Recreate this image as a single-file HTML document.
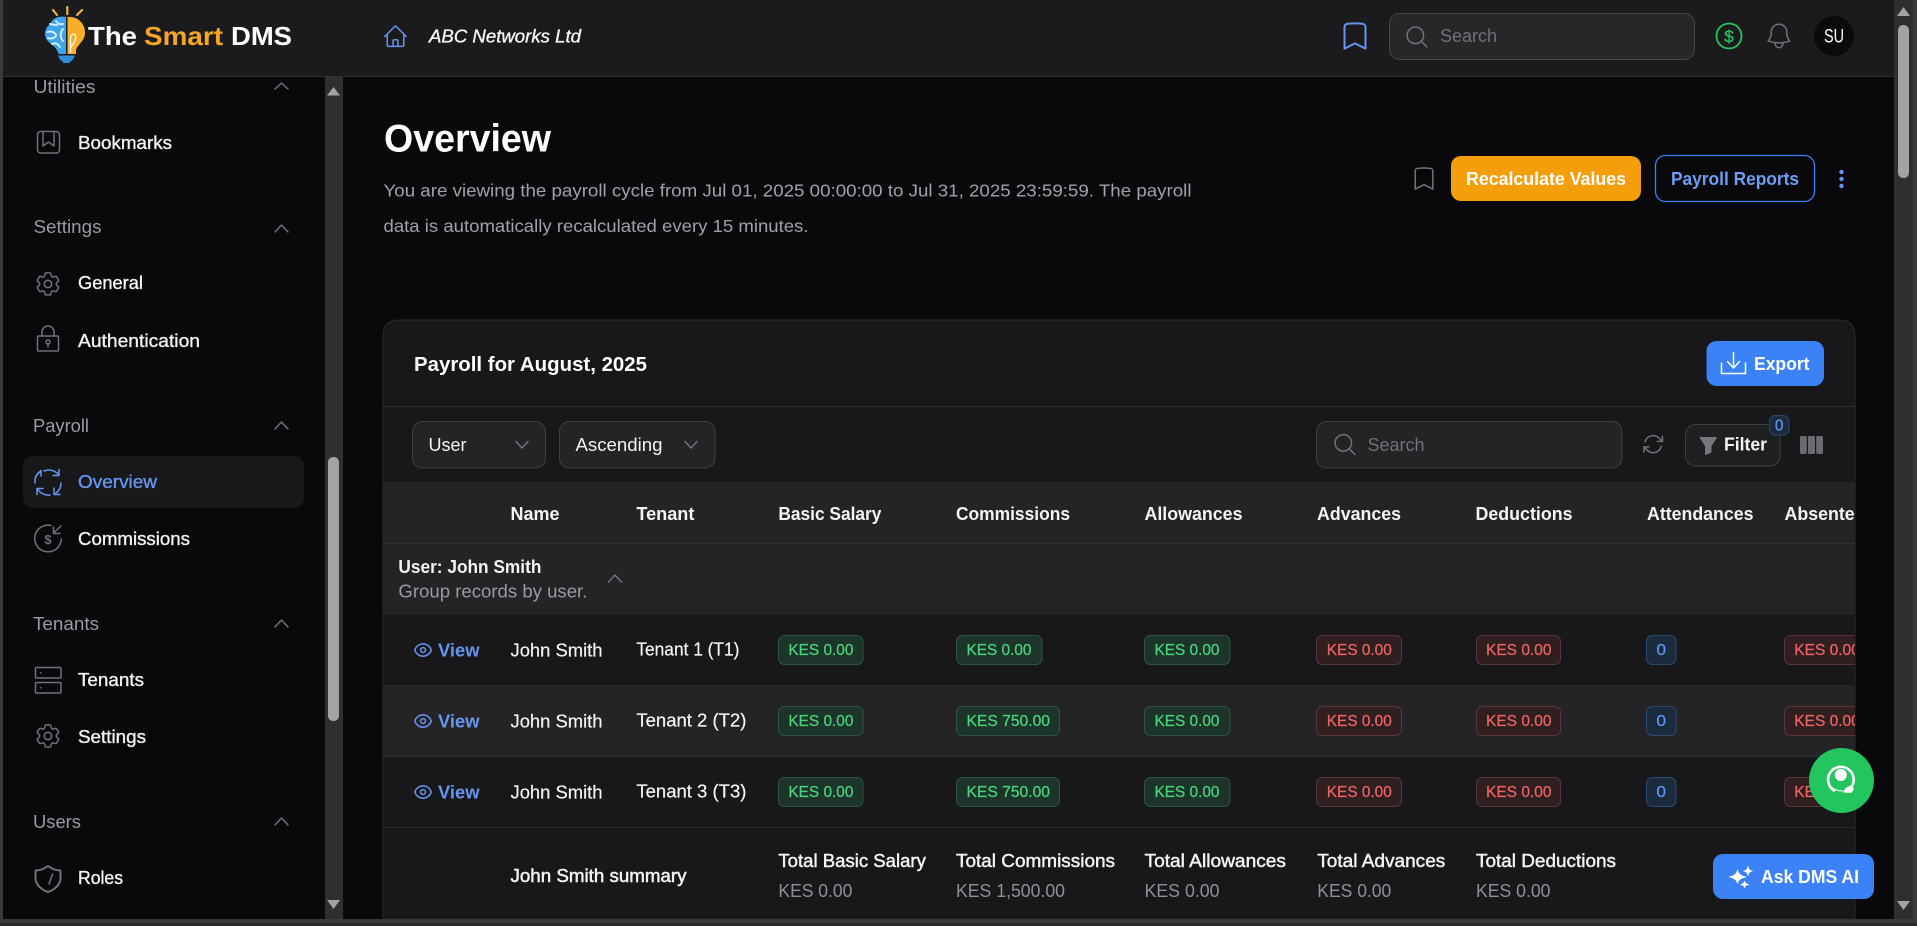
<!DOCTYPE html>
<html lang="en"><head><meta charset="utf-8"><title>Payroll Overview - The Smart DMS</title>
<style>
html,body{margin:0;padding:0;background:#3a3a3a;width:1917px;height:926px;overflow:hidden}
svg{display:block}
text{font-family:"Liberation Sans",sans-serif;fill:currentColor;font-size:18.2px;color:#f4f4f5;white-space:pre}
.m{stroke:currentColor;stroke-width:.35px}
.b{font-weight:700}
.g{color:#a1a1aa}
.h{color:#9a9aa2;font-size:18.2px}
.blue{color:#6496f0}
.kg{color:#4ad47c;font-size:15.5px;stroke:currentColor;stroke-width:.25px}
.kr{color:#ee6363;font-size:15.5px;stroke:currentColor;stroke-width:.25px}
.kb{color:#5b96f0;font-size:15.5px;stroke:currentColor;stroke-width:.25px}
.i{fill:none;stroke:#71717a;stroke-width:1.5;stroke-linecap:round;stroke-linejoin:round}
.i path,.i circle,.i rect{vector-effect:non-scaling-stroke}
.bg{fill:#1c3429;stroke:#2e5540;stroke-width:1}
.br{fill:#2f1f21;stroke:#5e3436;stroke-width:1}
.bb{fill:#1c2a3e;stroke:#2c4a70;stroke-width:1}
</style></head><body>
<svg width="1917" height="926" viewBox="0 0 1917 926" xmlns="http://www.w3.org/2000/svg">
<defs><clipPath id="c"><rect x="383" y="482" width="1472" height="437"/></clipPath></defs>
<rect width="1917" height="926" fill="#3a3a3a"/>
<rect y="923" width="1917" height="3" fill="#2a2a2a"/>
<rect x="3" y="0" width="1891" height="919" fill="#09090b"/>
<rect x="1894" y="0" width="19" height="919" fill="#2f2f2f"/>

<!-- header -->
<rect x="3" y="0" width="1891" height="77" fill="#1b1b1e"/>
<rect x="3" y="76" width="1891" height="1" fill="#303034"/>

<!-- logo -->
<g>
<path d="M67.300 7v7M53 10l4 5M82 10l-5 5" stroke="#edb245" stroke-width="2.200" stroke-linecap="round" fill="none"/>
<path d="M66 17C58 15.500 51.500 19 50.500 24C46 26.500 44 32 45.500 37C47 42 52 44 55 47.500C57 50 58 52 58.500 54H66Z" fill="#3fa4ef"/>
<path d="M67.500 17C78 16 85 24 85 32.500C85 41 78 44 76 50V54H67.500Z" fill="#f9ae2a"/>
<path d="M50 24c3 0 5 2 7 1M47.500 32c4-1 7 0 8.500 3M48 38c3 1 6 .5 8-2M56 21c1 2 4 4 7 3M63 29c-3 3-3 9 0 12M52 44c3-1.500 6-.5 8 3" stroke="#d8effd" stroke-width="1.900" fill="none" stroke-linecap="round"/>
<path d="M70.500 53V39c0-7 6.500-6 5 0c-1 4-3.500 6-5 9" stroke="#fff" stroke-width="1.300" fill="none"/>
<path d="M58 55.500H75L73 59.500L69 63H64L60 59.500Z" fill="#2f8fdc"/>
</g>
<text x="88" y="45" class="b" style="font-size:26px;color:#fff" textLength="49" lengthAdjust="spacingAndGlyphs">The</text>
<text x="144" y="45" class="b" style="font-size:26px;color:#f5a623" textLength="79" lengthAdjust="spacingAndGlyphs">Smart</text>
<text x="231" y="45" class="b" style="font-size:26px;color:#fff" textLength="61" lengthAdjust="spacingAndGlyphs">DMS</text>

<g class="i" transform="translate(382.300 23.300) scale(1.100)" style="stroke:#6496f0"><path d="M2.250 12l8.954-8.955c.44-.439 1.152-.439 1.591 0L21.750 12M4.500 9.750v10.125c0 .621.504 1.125 1.125 1.125H9.750v-4.875c0-.621.504-1.125 1.125-1.125h2.250c.621 0 1.125.504 1.125 1.125V21h4.125c.621 0 1.125-.504 1.125-1.125V9.750M8.250 21h8.250"/></g>
<text x="429" y="42.500" class="m" style="font-style:italic;font-size:18px" textLength="152" lengthAdjust="spacingAndGlyphs">ABC Networks Ltd</text>

<g class="i" transform="translate(1338.200 19.200) scale(1.400)" style="stroke:#6496f0;stroke-width:2"><path d="M17.593 3.322c1.100.128 1.907 1.077 1.907 2.185V21L12 17.250 4.500 21V5.507c0-1.108.806-2.057 1.907-2.185a48.507 48.507 0 0111.186 0z"/></g>
<rect x="1389.500" y="13.500" width="305" height="46" rx="10" fill="#27272a" stroke="#46464c"/>
<g class="i" transform="translate(1403.800 23.800) scale(1.100)"><path d="M21 21l-5.197-5.197m0 0A7.500 7.500 0 105.196 5.196a7.500 7.500 0 0010.607 10.607z"/></g>
<text x="1440" y="42" style="color:#71717a;font-size:18.500px" textLength="57" lengthAdjust="spacingAndGlyphs">Search</text>
<circle cx="1729" cy="36" r="12.500" fill="none" stroke="#22c55e" stroke-width="1.800"/>
<text x="1729" y="42" text-anchor="middle" class="m" style="font-size:17px;color:#22c55e">$</text>
<g class="i" transform="translate(1763.400 20.400) scale(1.300)"><path d="M14.857 17.082a23.848 23.848 0 005.454-1.310A8.967 8.967 0 0118 9.750v-.7V9A6 6 0 006 9v.750a8.967 8.967 0 01-2.312 6.022c1.733.64 3.560 1.085 5.455 1.310m5.714 0a24.255 24.255 0 01-5.714 0m5.714 0a3 3 0 11-5.714 0"/></g>
<circle cx="1834" cy="36" r="20" fill="#0a0a0b"/>
<text x="1824" y="42.500" style="font-size:19px;color:#fff" textLength="20" lengthAdjust="spacingAndGlyphs">SU</text>

<!-- main scrollbar -->
<path d="M1903.500 7L1910 16H1897Z" fill="#a3a3a3"/>
<rect x="1898" y="25" width="11" height="153" rx="5" fill="#a3a3a3"/>
<path d="M1903.500 910L1910 901H1897Z" fill="#a3a3a3"/>

<!-- sidebar -->
<path d="M3 77H325V919H15Q3 919 3 907Z" fill="#09090b"/>
<rect x="325" y="77" width="18" height="842" fill="#2f2f2f"/>
<path d="M333.500 87L340 95.500H327Z" fill="#a3a3a3"/>
<rect x="328" y="457" width="11" height="264" rx="5" fill="#a3a3a3"/>
<path d="M333.500 909L340 900H327Z" fill="#a3a3a3"/>

<text x="33.500" y="93" class="h" textLength="62" lengthAdjust="spacingAndGlyphs">Utilities</text>
<g class="i"><path d="M275 89l6.500-6 6.500 6"/></g>
<g class="i"><rect x="37.500" y="131.500" width="22" height="21.500" rx="3"/><path d="M43 132v14l5.500-4 5.500 4v-14"/></g>
<text x="78" y="149" class="m" textLength="94" lengthAdjust="spacingAndGlyphs">Bookmarks</text>

<text x="33.500" y="233" class="h" textLength="68" lengthAdjust="spacingAndGlyphs">Settings</text>
<g class="i"><path d="M275 232l6.500-7 6.500 7"/></g>
<g class="i" transform="translate(33.200 269.200) scale(1.230)"><path d="M9.594 3.940c.09-.542.56-.94 1.110-.94h2.593c.55 0 1.020.398 1.110.94l.213 1.281c.063.374.313.686.645.87.074.04.147.083.22.127.324.196.72.257 1.075.124l1.217-.456a1.125 1.125 0 011.370.49l1.296 2.247a1.125 1.125 0 01-.26 1.431l-1.003.827c-.293.24-.438.613-.431.992a6.759 6.759 0 010 .255c-.007.378.138.75.43.99l1.005.828c.424.35.534.954.26 1.430l-1.298 2.247a1.125 1.125 0 01-1.369.491l-1.217-.456c-.355-.133-.75-.072-1.076.124a6.570 6.570 0 01-.22.128c-.331.183-.581.495-.644.869l-.213 1.280c-.09.543-.56.941-1.110.941h-2.594c-.55 0-1.020-.398-1.110-.94l-.213-1.281c-.062-.374-.312-.686-.644-.87a6.520 6.520 0 01-.22-.127c-.325-.196-.72-.257-1.076-.124l-1.217.456a1.125 1.125 0 01-1.369-.49l-1.297-2.247a1.125 1.125 0 01.26-1.431l1.004-.827c.292-.24.437-.613.43-.992a6.932 6.932 0 010-.255c.007-.378-.138-.75-.43-.99l-1.004-.828a1.125 1.125 0 01-.26-1.430l1.297-2.247a1.125 1.125 0 011.370-.491l1.216.456c.356.133.751.072 1.076-.124.072-.044.146-.087.22-.128.332-.183.582-.495.644-.869l.214-1.281z"/><path d="M15 12a3 3 0 11-6 0 3 3 0 016 0z"/></g>
<text x="78" y="289" class="m" textLength="65" lengthAdjust="spacingAndGlyphs">General</text>

<g class="i"><rect x="37.500" y="336" width="21" height="15" rx="1"/><path d="M42 336v-4a6 6 0 0112 0v4M48 344v3"/><circle cx="48" cy="342" r="2"/></g>
<text x="78" y="347" class="m" textLength="122" lengthAdjust="spacingAndGlyphs">Authentication</text>

<text x="33" y="432" class="h" textLength="56" lengthAdjust="spacingAndGlyphs">Payroll</text>
<g class="i"><path d="M275 429l6.500-7 6.500 7"/></g>
<rect x="23" y="456" width="281" height="52" rx="10" fill="#18181b"/>
<g class="i" style="stroke:#6496f0"><path d="M44 471A13 13 0 0159 475M59 469.500V475.500H53M61 483A13 13 0 0155.500 493.500M54 488V494.500H60M50 495A13 13 0 0137.500 489M37 494.500V488.500H43M35 483A13 13 0 0140 471.500M35.500 476.500L41 470.500V476"/></g>
<text x="78" y="488" class="blue m" textLength="79" lengthAdjust="spacingAndGlyphs">Overview</text>

<g class="i"><path d="M51 525.500A13.300 13.300 0 1061.300 539M61 526L53.500 533M53.500 527V533.500H60"/></g>
<text x="48" y="544" text-anchor="middle" class="b" style="font-size:13px;color:#71717a">$</text>
<text x="78" y="545" class="m" textLength="112" lengthAdjust="spacingAndGlyphs">Commissions</text>

<text x="33" y="630" class="h" textLength="66" lengthAdjust="spacingAndGlyphs">Tenants</text>
<g class="i"><path d="M275 627l6.500-7 6.500 7"/></g>
<g class="i"><rect x="35.500" y="667.500" width="25.500" height="10.500" rx="1"/><rect x="35.500" y="682.500" width="25.500" height="10.500" rx="1"/><path d="M40.500 672.800h.3M40.500 687.800h.3"/></g>
<text x="78" y="686" class="m" textLength="66" lengthAdjust="spacingAndGlyphs">Tenants</text>

<g class="i" transform="translate(33.200 721.200) scale(1.230)"><path d="M9.594 3.940c.09-.542.56-.94 1.110-.94h2.593c.55 0 1.020.398 1.110.94l.213 1.281c.063.374.313.686.645.87.074.04.147.083.22.127.324.196.72.257 1.075.124l1.217-.456a1.125 1.125 0 011.370.49l1.296 2.247a1.125 1.125 0 01-.26 1.431l-1.003.827c-.293.24-.438.613-.431.992a6.759 6.759 0 010 .255c-.007.378.138.75.43.99l1.005.828c.424.35.534.954.26 1.430l-1.298 2.247a1.125 1.125 0 01-1.369.491l-1.217-.456c-.355-.133-.75-.072-1.076.124a6.570 6.570 0 01-.22.128c-.331.183-.581.495-.644.869l-.213 1.280c-.09.543-.56.941-1.110.941h-2.594c-.55 0-1.020-.398-1.110-.94l-.213-1.281c-.062-.374-.312-.686-.644-.87a6.520 6.520 0 01-.22-.127c-.325-.196-.72-.257-1.076-.124l-1.217.456a1.125 1.125 0 01-1.369-.49l-1.297-2.247a1.125 1.125 0 01.26-1.431l1.004-.827c.292-.24.437-.613.43-.992a6.932 6.932 0 010-.255c.007-.378-.138-.75-.43-.99l-1.004-.828a1.125 1.125 0 01-.26-1.430l1.297-2.247a1.125 1.125 0 011.370-.491l1.216.456c.356.133.751.072 1.076-.124.072-.044.146-.087.22-.128.332-.183.582-.495.644-.869l.214-1.281z"/><path d="M15 12a3 3 0 11-6 0 3 3 0 016 0z"/></g>
<text x="78" y="743" class="m" textLength="68" lengthAdjust="spacingAndGlyphs">Settings</text>

<text x="33" y="828" class="h" textLength="48" lengthAdjust="spacingAndGlyphs">Users</text>
<g class="i"><path d="M275 825l6.500-7 6.500 7"/></g>
<g class="i" style="stroke-width:2"><path d="M48 866C52 869 57 870.500 60.500 870.500V878C60.500 885 54 890 48 892C42 890 35.500 885 35.500 878V870.500C39 870.500 44 869 48 866Z"/><path d="M52.500 874L49 884" style="stroke-width:1.500"/></g>
<text x="78" y="884" class="m" textLength="45" lengthAdjust="spacingAndGlyphs">Roles</text>

<!-- page head -->
<text x="384" y="151.500" class="b" style="font-size:39px;color:#fff" textLength="167" lengthAdjust="spacingAndGlyphs">Overview</text>
<text x="383.500" y="196.500" class="g" style="font-size:17.800px" textLength="808" lengthAdjust="spacingAndGlyphs">You are viewing the payroll cycle from Jul 01, 2025 00:00:00 to Jul 31, 2025 23:59:59. The payroll</text>
<text x="383.500" y="232" class="g" style="font-size:17.800px" textLength="425" lengthAdjust="spacingAndGlyphs">data is automatically recalculated every 15 minutes.</text>

<g class="i" transform="translate(1410 164.500) scale(1.170)"><path d="M17.593 3.322c1.100.128 1.907 1.077 1.907 2.185V21L12 17.250 4.500 21V5.507c0-1.108.806-2.057 1.907-2.185a48.507 48.507 0 0111.186 0z"/></g>
<rect x="1451" y="156" width="190" height="45" rx="10" fill="#f59e0b"/>
<text x="1466" y="185" class="b" style="font-size:18px;color:#fff" textLength="160" lengthAdjust="spacingAndGlyphs">Recalculate Values</text>
<rect x="1655.500" y="155.500" width="159" height="46" rx="10" fill="none" stroke="#3b82f6" stroke-width="1.300"/>
<text x="1671" y="185" class="b" style="font-size:18px;color:#6a9ff5" textLength="128" lengthAdjust="spacingAndGlyphs">Payroll Reports</text>
<circle cx="1841.500" cy="172" r="2.200" fill="#6496f0"/><circle cx="1841.500" cy="179" r="2.200" fill="#6496f0"/><circle cx="1841.500" cy="186" r="2.200" fill="#6496f0"/>

<!-- card -->
<path d="M383 336Q383 320 399 320H1839Q1855 320 1855 336V919H383Z" fill="#18181b" stroke="#2a2a2e"/>
<rect x="383" y="406" width="1472" height="1" fill="#2f2f33"/>
<text x="414" y="371" class="b" style="font-size:20px;color:#fff" textLength="233" lengthAdjust="spacingAndGlyphs">Payroll for August, 2025</text>
<rect x="1706.500" y="341" width="117.500" height="45" rx="10" fill="#3b82f6"/>
<g class="i" style="stroke:#fff"><path d="M1721.500 363v10.500h24V363M1733.500 352.500v15M1727.500 361.500l6 6.500 6-6.500"/></g>
<text x="1754" y="370" class="b" style="font-size:18.500px;color:#fff" textLength="55.500" lengthAdjust="spacingAndGlyphs">Export</text>

<rect x="412.500" y="421.500" width="133" height="46.500" rx="10" fill="#242427" stroke="#3f3f46"/>
<text x="428.500" y="451" style="font-size:18.200px" textLength="38" lengthAdjust="spacingAndGlyphs">User</text>
<g class="i"><path d="M516 441.500l6 6.500 6-6.500"/></g>
<rect x="559.500" y="421.500" width="155.500" height="46.500" rx="10" fill="#242427" stroke="#3f3f46"/>
<text x="575.500" y="451" style="font-size:18.200px" textLength="87" lengthAdjust="spacingAndGlyphs">Ascending</text>
<g class="i"><path d="M685 441.500l6 6.500 6-6.500"/></g>

<rect x="1316.500" y="421.500" width="305.500" height="46.500" rx="10" fill="#242427" stroke="#3f3f46"/>
<g class="i" transform="translate(1331.800 431.300) scale(1.100)"><path d="M21 21l-5.197-5.197m0 0A7.500 7.500 0 105.196 5.196a7.500 7.500 0 0010.607 10.607z"/></g>
<text x="1367.500" y="451" style="color:#71717a;font-size:18.500px" textLength="57" lengthAdjust="spacingAndGlyphs">Search</text>
<g class="i" transform="translate(1640.800 431.800) scale(1.030)"><path d="M16.023 9.348h4.992v-.001M2.985 19.644v-4.992m0 0h4.992m-4.993 0l3.181 3.183a8.250 8.250 0 0013.803-3.700M4.031 9.865a8.250 8.250 0 0113.803-3.700l3.181 3.182m0-4.991v4.990"/></g>
<rect x="1685.500" y="424.500" width="94.500" height="41.500" rx="10" fill="#1f1f22" stroke="#3f3f46"/>
<path d="M1700 437.500H1716.500L1711 446V452L1705.500 454.500V446Z" fill="#76767e" stroke="#76767e" stroke-linejoin="round"/>
<text x="1724" y="450.500" class="b" style="font-size:18.200px;color:#f4f4f5" textLength="43" lengthAdjust="spacingAndGlyphs">Filter</text>
<rect x="1769.500" y="415.500" width="19.500" height="19.500" rx="6" fill="#1c2a3e" stroke="#2c4a70"/>
<text x="1779.200" y="430.500" text-anchor="middle" class="kb" style="font-size:15.500px">0</text>
<rect x="1800" y="436" width="6.800" height="18" rx="1.500" fill="#6b6b72"/><rect x="1808" y="436" width="7" height="18" rx="1" fill="#6b6b72"/><rect x="1816.200" y="436" width="6.800" height="18" rx="1.500" fill="#6b6b72"/>

<!-- table -->
<rect x="383" y="482" width="1472" height="133" fill="#242427"/>
<rect x="383" y="543" width="1472" height="1" fill="#2f2f33"/>
<rect x="383" y="685" width="1472" height="71" fill="#242427"/>
<rect x="383" y="756" width="1472" height="1" fill="#2f2f33"/>
<rect x="383" y="827" width="1472" height="1" fill="#2a2a2e"/>

<g clip-path="url(#c)">
<text x="510.500" y="520" class="b" textLength="49" lengthAdjust="spacingAndGlyphs">Name</text>
<text x="636.400" y="520" class="b" textLength="58" lengthAdjust="spacingAndGlyphs">Tenant</text>
<text x="778.400" y="520" class="b" textLength="103" lengthAdjust="spacingAndGlyphs">Basic Salary</text>
<text x="956" y="520" class="b" textLength="114" lengthAdjust="spacingAndGlyphs">Commissions</text>
<text x="1144.500" y="520" class="b" textLength="98" lengthAdjust="spacingAndGlyphs">Allowances</text>
<text x="1317" y="520" class="b" textLength="84" lengthAdjust="spacingAndGlyphs">Advances</text>
<text x="1475.500" y="520" class="b" textLength="97" lengthAdjust="spacingAndGlyphs">Deductions</text>
<text x="1647" y="520" class="b" textLength="106.500" lengthAdjust="spacingAndGlyphs">Attendances</text>
<text x="1784.500" y="520" class="b" textLength="90" lengthAdjust="spacingAndGlyphs">Absentees</text>

<text x="398.400" y="573" class="b" textLength="143" lengthAdjust="spacingAndGlyphs">User: John Smith</text>
<text x="398.400" y="597.500" class="g" style="color:#9a9aa2" textLength="189" lengthAdjust="spacingAndGlyphs">Group records by user.</text>
<g class="i"><path d="M608.500 582l6.500-7 6.500 7"/></g>

<!-- row 1 -->
<g class="i" transform="translate(413.200 640.200) scale(.82)" style="stroke:#6496f0"><path d="M2.036 12.322a1.012 1.012 0 010-.639C3.423 7.510 7.360 4.500 12 4.500c4.638 0 8.573 3.007 9.963 7.178.07.207.07.431 0 .639C20.577 16.490 16.640 19.500 12 19.500c-4.638 0-8.573-3.007-9.963-7.178z"/><circle cx="12" cy="12" r="3"/></g>
<text x="438" y="656.500" class="b blue" textLength="41.500" lengthAdjust="spacingAndGlyphs">View</text>
<text x="510.500" y="656.500" class="m" style="stroke-width:.2px" textLength="92" lengthAdjust="spacingAndGlyphs">John Smith</text>
<text x="636.400" y="655.500" class="m" style="stroke-width:.2px" textLength="103" lengthAdjust="spacingAndGlyphs">Tenant 1 (T1)</text>
<rect x="778.500" y="635.500" width="84.500" height="29" rx="6" class="bg"/><text x="788.400" y="655" class="kg" textLength="65" lengthAdjust="spacingAndGlyphs">KES 0.00</text>
<rect x="956.500" y="635.500" width="85.500" height="29" rx="6" class="bg"/><text x="966.500" y="655" class="kg" textLength="65" lengthAdjust="spacingAndGlyphs">KES 0.00</text>
<rect x="1144.500" y="635.500" width="85.500" height="29" rx="6" class="bg"/><text x="1154.500" y="655" class="kg" textLength="65" lengthAdjust="spacingAndGlyphs">KES 0.00</text>
<rect x="1316.500" y="635.500" width="85" height="29" rx="6" class="br"/><text x="1326.800" y="655" class="kr" textLength="65" lengthAdjust="spacingAndGlyphs">KES 0.00</text>
<rect x="1476.500" y="635.500" width="84" height="29" rx="6" class="br"/><text x="1486" y="655" class="kr" textLength="65.500" lengthAdjust="spacingAndGlyphs">KES 0.00</text>
<rect x="1646.500" y="635.500" width="29.500" height="29" rx="6" class="bb"/><text x="1656.500" y="655" class="kb" textLength="9.500" lengthAdjust="spacingAndGlyphs">0</text>
<rect x="1784.500" y="635.500" width="85" height="29" rx="6" class="br"/><text x="1794.300" y="655" class="kr" textLength="65.500" lengthAdjust="spacingAndGlyphs">KES 0.00</text>

<!-- row 2 -->
<g class="i" transform="translate(413.200 711.200) scale(.82)" style="stroke:#6496f0"><path d="M2.036 12.322a1.012 1.012 0 010-.639C3.423 7.510 7.360 4.500 12 4.500c4.638 0 8.573 3.007 9.963 7.178.07.207.07.431 0 .639C20.577 16.490 16.640 19.500 12 19.500c-4.638 0-8.573-3.007-9.963-7.178z"/><circle cx="12" cy="12" r="3"/></g>
<text x="438" y="727.500" class="b blue" textLength="41.500" lengthAdjust="spacingAndGlyphs">View</text>
<text x="510.500" y="727.500" class="m" style="stroke-width:.2px" textLength="92" lengthAdjust="spacingAndGlyphs">John Smith</text>
<text x="636.400" y="726.500" class="m" style="stroke-width:.2px" textLength="110" lengthAdjust="spacingAndGlyphs">Tenant 2 (T2)</text>
<rect x="778.500" y="706.500" width="84.500" height="29" rx="6" class="bg"/><text x="788.400" y="726" class="kg" textLength="65" lengthAdjust="spacingAndGlyphs">KES 0.00</text>
<rect x="956.500" y="706.500" width="103" height="29" rx="6" class="bg"/><text x="966.500" y="726" class="kg" textLength="83.500" lengthAdjust="spacingAndGlyphs">KES 750.00</text>
<rect x="1144.500" y="706.500" width="85.500" height="29" rx="6" class="bg"/><text x="1154.500" y="726" class="kg" textLength="65" lengthAdjust="spacingAndGlyphs">KES 0.00</text>
<rect x="1316.500" y="706.500" width="85" height="29" rx="6" class="br"/><text x="1326.800" y="726" class="kr" textLength="65" lengthAdjust="spacingAndGlyphs">KES 0.00</text>
<rect x="1476.500" y="706.500" width="84" height="29" rx="6" class="br"/><text x="1486" y="726" class="kr" textLength="65.500" lengthAdjust="spacingAndGlyphs">KES 0.00</text>
<rect x="1646.500" y="706.500" width="29.500" height="29" rx="6" class="bb"/><text x="1656.500" y="726" class="kb" textLength="9.500" lengthAdjust="spacingAndGlyphs">0</text>
<rect x="1784.500" y="706.500" width="85" height="29" rx="6" class="br"/><text x="1794.300" y="726" class="kr" textLength="65.500" lengthAdjust="spacingAndGlyphs">KES 0.00</text>

<!-- row 3 -->
<g class="i" transform="translate(413.200 782.200) scale(.82)" style="stroke:#6496f0"><path d="M2.036 12.322a1.012 1.012 0 010-.639C3.423 7.510 7.360 4.500 12 4.500c4.638 0 8.573 3.007 9.963 7.178.07.207.07.431 0 .639C20.577 16.490 16.640 19.500 12 19.500c-4.638 0-8.573-3.007-9.963-7.178z"/><circle cx="12" cy="12" r="3"/></g>
<text x="438" y="798.500" class="b blue" textLength="41.500" lengthAdjust="spacingAndGlyphs">View</text>
<text x="510.500" y="798.500" class="m" style="stroke-width:.2px" textLength="92" lengthAdjust="spacingAndGlyphs">John Smith</text>
<text x="636.400" y="797.500" class="m" style="stroke-width:.2px" textLength="110" lengthAdjust="spacingAndGlyphs">Tenant 3 (T3)</text>
<rect x="778.500" y="777.500" width="84.500" height="29" rx="6" class="bg"/><text x="788.400" y="797" class="kg" textLength="65" lengthAdjust="spacingAndGlyphs">KES 0.00</text>
<rect x="956.500" y="777.500" width="103" height="29" rx="6" class="bg"/><text x="966.500" y="797" class="kg" textLength="83.500" lengthAdjust="spacingAndGlyphs">KES 750.00</text>
<rect x="1144.500" y="777.500" width="85.500" height="29" rx="6" class="bg"/><text x="1154.500" y="797" class="kg" textLength="65" lengthAdjust="spacingAndGlyphs">KES 0.00</text>
<rect x="1316.500" y="777.500" width="85" height="29" rx="6" class="br"/><text x="1326.800" y="797" class="kr" textLength="65" lengthAdjust="spacingAndGlyphs">KES 0.00</text>
<rect x="1476.500" y="777.500" width="84" height="29" rx="6" class="br"/><text x="1486" y="797" class="kr" textLength="65.500" lengthAdjust="spacingAndGlyphs">KES 0.00</text>
<rect x="1646.500" y="777.500" width="29.500" height="29" rx="6" class="bb"/><text x="1656.500" y="797" class="kb" textLength="9.500" lengthAdjust="spacingAndGlyphs">0</text>
<rect x="1784.500" y="777.500" width="85" height="29" rx="6" class="br"/><text x="1794.300" y="797" class="kr" textLength="65.500" lengthAdjust="spacingAndGlyphs">KES 0.00</text>

<!-- summary -->
<text x="510.500" y="882" class="m" style="stroke-width:.5px" textLength="176" lengthAdjust="spacingAndGlyphs">John Smith summary</text>
<text x="778.400" y="867" class="m" style="stroke-width:.45px" textLength="147.500" lengthAdjust="spacingAndGlyphs">Total Basic Salary</text>
<text x="778.400" y="897" class="g" style="color:#8f8f97" textLength="74" lengthAdjust="spacingAndGlyphs">KES 0.00</text>
<text x="956" y="867" class="m" style="stroke-width:.45px" textLength="159" lengthAdjust="spacingAndGlyphs">Total Commissions</text>
<text x="956" y="897" class="g" style="color:#8f8f97" textLength="109" lengthAdjust="spacingAndGlyphs">KES 1,500.00</text>
<text x="1144.500" y="867" class="m" style="stroke-width:.45px" textLength="141.500" lengthAdjust="spacingAndGlyphs">Total Allowances</text>
<text x="1144.500" y="897" class="g" style="color:#8f8f97" textLength="75" lengthAdjust="spacingAndGlyphs">KES 0.00</text>
<text x="1317.300" y="867" class="m" style="stroke-width:.45px" textLength="128" lengthAdjust="spacingAndGlyphs">Total Advances</text>
<text x="1317.300" y="897" class="g" style="color:#8f8f97" textLength="74" lengthAdjust="spacingAndGlyphs">KES 0.00</text>
<text x="1476" y="867" class="m" style="stroke-width:.45px" textLength="140" lengthAdjust="spacingAndGlyphs">Total Deductions</text>
<text x="1476" y="897" class="g" style="color:#8f8f97" textLength="74.500" lengthAdjust="spacingAndGlyphs">KES 0.00</text>
</g>

<!-- floating -->
<circle cx="1841.500" cy="780.500" r="32.500" fill="#22c55e"/>
<path d="M1834 790.500A12.800 12.800 0 1 1 1851 787.500" fill="none" stroke="#fff" stroke-width="2.600" stroke-linecap="round"/>
<circle cx="1840.800" cy="775" r="6" fill="#fff"/>
<path d="M1832 787.500Q1836 791 1843 791" fill="none" stroke="#fff" stroke-width="1"/>
<path d="M1843 792.500Q1845 787 1850 786Q1854.500 787 1853.500 790L1851 793Z" fill="#fff"/>
<rect x="1713" y="854" width="161" height="45" rx="10" fill="#3b82f6"/>
<path d="M1737.500 870Q1738.500 876 1746 877Q1738.500 878 1737.500 883.500Q1736.500 878 1729 877Q1736.500 876 1737.500 870Z" fill="#fff" stroke="#fff" stroke-width=".8"/>
<path d="M1748 866Q1748.500 870.500 1752.600 871Q1748.500 871.500 1748 876Q1747.500 871.500 1743.400 871Q1747.500 870.500 1748 866Z" fill="#fff" stroke="#fff" stroke-width=".6"/>
<path d="M1744.500 881Q1745 884 1749 884.500Q1745 885 1744.500 888Q1744 885 1740 884.500Q1744 884 1744.500 881Z" fill="#fff" stroke="#fff" stroke-width=".6"/>
<text x="1761" y="883" class="b" style="font-size:18.500px;color:#fff" textLength="98" lengthAdjust="spacingAndGlyphs">Ask DMS AI</text>
</svg>
</body></html>
